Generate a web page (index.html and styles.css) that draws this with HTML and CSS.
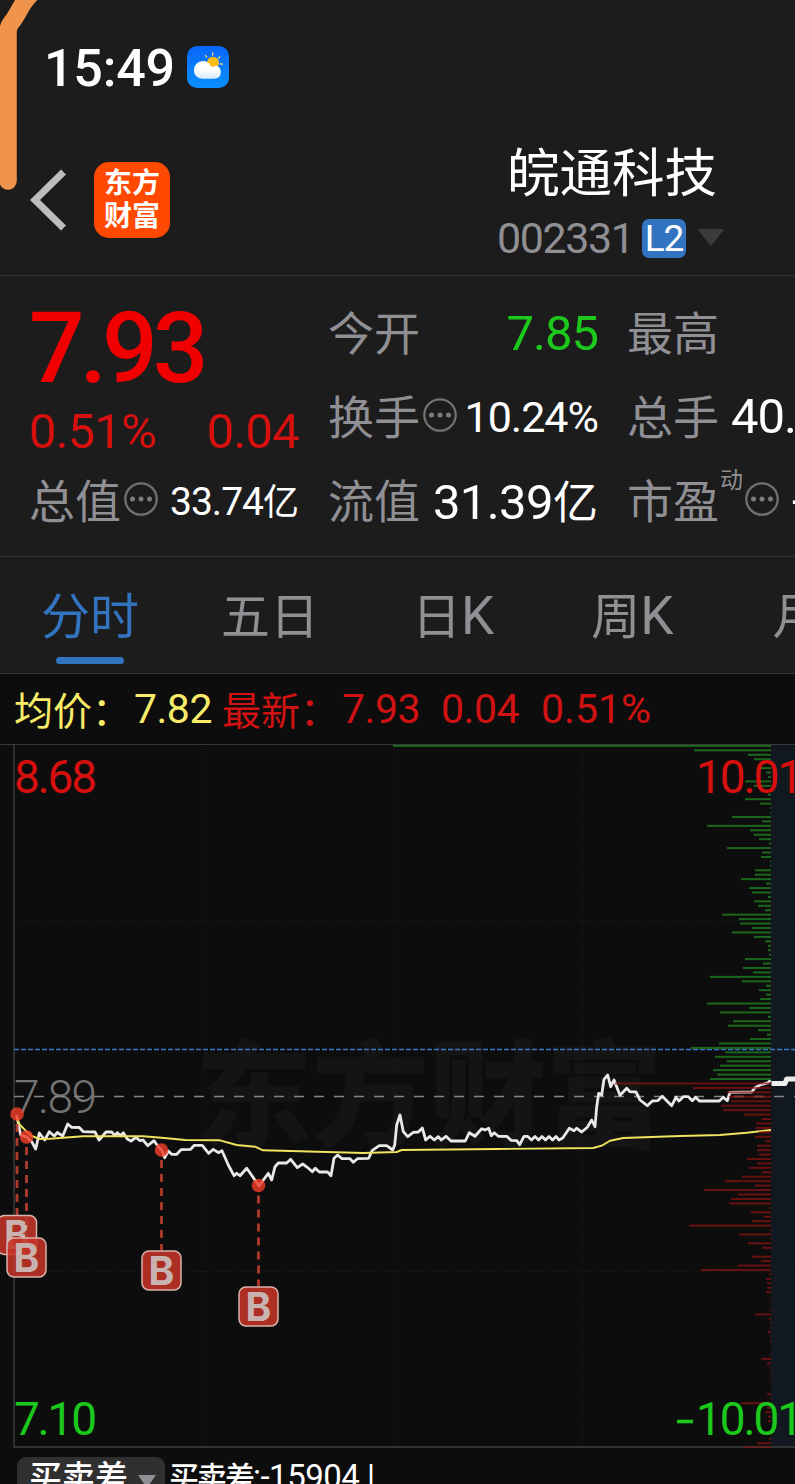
FILE: index.html
```html
<!DOCTYPE html>
<html lang="zh-CN">
<head>
<meta charset="utf-8">
<title>皖通科技 002331</title>
<link rel="stylesheet" href="styles.css">
</head>
<body>
<svg class="edge-stroke" width="50" height="200" viewBox="0 0 50 200"><path d="M32-7C20 4 19 14 11 23Q8 27 8 32V181" fill="none" stroke="#f1944b" stroke-width="17.500" stroke-linecap="round" stroke-linejoin="round"/></svg>
<div class="status">
  <span class="clock">15:49</span>
  <svg class="weather" width="42" height="42" viewBox="0 0 42 42">
    <defs><linearGradient id="sky" x1="0" y1="0" x2="0" y2="1"><stop offset="0" stop-color="#0865f8"/><stop offset="1" stop-color="#0a91ff"/></linearGradient>
    <linearGradient id="cloud" x1="0" y1="0" x2="0" y2="1"><stop offset=".5" stop-color="#fff"/><stop offset="1" stop-color="#d5eaff"/></linearGradient></defs>
    <rect width="42" height="42" rx="10" fill="url(#sky)"/>
    <path d="M18.500 9.500l1 1.700M25.700 7v2.200M32.800 10.500l-1.300 2M33 17.800l2.500.4M31.500 22l1 .8" stroke="#f8d98a" stroke-width="1.300" stroke-linecap="round"/>
    <circle cx="26" cy="16.800" r="6" fill="#fdbb16"/>
    <path d="M15 32.700A8 8 0 0 1 7 24.500 9 9 0 0 1 16 15Q21.500 15 24 20.500 26.500 21.500 29 19.500 33.800 21 33.800 26 33.800 32.700 27 32.700z" fill="url(#cloud)"/>
  </svg>
</div>
<header class="header">
  <svg class="back" width="37" height="62" viewBox="0 0 37 62"><path d="M33.500 3L5 31l28.500 28" fill="none" stroke="#bdbdbd" stroke-width="7"/></svg>
  <div class="logo"><span>东方</span><span>财富</span></div>
  <div class="stock">
    <div class="name">皖通科技</div>
    <div class="code-row"><span class="code">002331</span><span class="level">L2</span><svg width="26" height="18" viewBox="0 0 26 18"><path d="M2 0h22q2 0 1 2L14 16q-1 1.500-2 0L1 2Q0 0 2 0z" fill="#3b3b3b"/></svg></div>
  </div>
</header>
<section class="quote">
  <div class="col col-a">
    <div class="price">7.93</div>
    <div class="change"><span>0.51%</span><span>0.04</span></div>
    <div class="cell"><span class="label">总值</span><svg class="more" viewBox="0 0 34 34"><use href="#dots"/></svg><b class="val small">33.74<i>亿</i></b></div>
  </div>
  <div class="col col-b">
    <div class="cell"><span class="label">今开</span><b class="val open">7.85</b></div>
    <div class="cell"><span class="label">换手</span><svg class="more" viewBox="0 0 34 34"><use href="#dots"/></svg><b class="val medium">10.24%</b></div>
    <div class="cell"><span class="label">流值</span><b class="val wide">31.39<i>亿</i></b></div>
  </div>
  <div class="col col-c">
    <div class="cell"><span class="label">最高</span></div>
    <div class="cell"><span class="label">总手</span><b class="val start">40.</b></div>
    <div class="cell"><span class="label">市盈</span><sup>动</sup><svg class="more" viewBox="0 0 34 34"><g id="dots"><circle cx="17" cy="17" r="15.700" fill="none" stroke="#707070" stroke-width="2.300"/><g fill="#7c7c7c"><circle cx="8.500" cy="17" r="2.500"/><circle cx="17" cy="17" r="2.500"/><circle cx="25.500" cy="17" r="2.500"/></g></g></svg><b class="val minus">-</b></div>
  </div>
</section>
<nav class="tabs">
  <span class="tab active">分时</span><span class="tab">五日</span><span class="tab">日<em>K</em></span><span class="tab">周<em>K</em></span><span class="tab">月</span>
</nav>
<div class="legend">
  <span class="avg">均价：</span><span class="num avg n1">7.82</span><span class="last">最新：</span><span class="num n2">7.93</span><span class="num n3">0.04</span><span class="num n4">0.51%</span>
</div>
<svg class="chart" width="795" height="704" viewBox="0 744 795 704">
  <rect x="771" y="745" width="24" height="702" fill="#111820"/>
  <text class="watermark" x="195" y="1138" textLength="468" lengthAdjust="spacingAndGlyphs">东方财富</text>
  <path d="M205.500 746V1446M394 746V1446M582.500 746V1446M15 921.500H795M15 1271.500H795" stroke="#1f1f1f" stroke-dasharray="1 2"/>
  <path d="M0 744.500H795" stroke="#393939"/>
  <path d="M14 745V1447H795" fill="none" stroke="#323232" stroke-width="1.800"/>
  <path d="M14 1049.500H795" stroke="#3b78cc" stroke-width="1.300" stroke-dasharray="5 2"/>
  <text class="mid" x="14" y="1112.500" textLength="83">7.89</text>
  <path d="M14 1096.500H795" stroke="#858585" stroke-width="1.700" stroke-dasharray="10 10"/>
  <polyline class="line" stroke="#e9e9e9" stroke-width="2.800" points="16.700,1115 19,1127 20.700,1135 26.700,1137 31.700,1141.700 35.700,1149 39.300,1133 44.700,1140 49.300,1131.700 54.300,1136 57.300,1132.500 62.700,1136 67.700,1124 71.700,1127.300 79.300,1127.500 83.300,1131.700 95,1132 99,1140 106,1132 111.700,1132 115,1135.700 117.300,1132.700 120.500,1135.700 123.300,1132.700 127.300,1139 131,1141 136,1137.300 140,1140.700 143,1140 147.700,1145.700 154,1140.700 158.300,1146.700 161.700,1150 164.700,1157.700 168.300,1151 171.700,1154.300 176.700,1154.300 181,1149.700 190.700,1149.300 194.300,1145.300 202.300,1145.300 208.700,1153.300 213.300,1149.300 218.300,1152.700 222,1150.700 228.300,1165 234,1175.700 236.700,1173.300 240,1175.700 246.700,1168.300 255,1180 259,1186 263.300,1180 268.300,1173.300 271.700,1180 275,1166.700 278.300,1163 286.700,1163 290.700,1159.300 297.300,1167.700 302.700,1164 307.300,1167.300 312.300,1171.700 315.300,1168.300 319.300,1172 327.700,1172 331,1175.700 334,1158.300 337.700,1155 342,1158.700 350,1158.700 353.300,1162.300 357.300,1158.700 368.700,1158.300 372,1150.700 379.300,1145.700 386.700,1145.700 392.700,1150 394.700,1145 396.700,1125 400,1115 403.300,1131.700 407.700,1136.700 413.300,1132.300 418.300,1132 422.300,1128 425.700,1140 430,1136.300 434.300,1140 438.300,1136.700 441.300,1140 446,1136.300 451,1141 465.300,1141 469.300,1132.700 475,1136.300 481.700,1128.700 485,1130 488.700,1128.300 491.300,1135.700 494.300,1132.700 498.300,1136.300 506.700,1136.300 511,1140.300 516.700,1140.700 519.700,1144.700 524,1136.300 527.500,1136.300 531.500,1140 535,1136.500 538.500,1140 542,1136.500 545.500,1140 549,1136.500 552.500,1140 556,1136.500 559,1140 562.700,1138 569.300,1128.300 574,1130.700 576.700,1128.300 581.700,1132 587.300,1127.300 591.700,1120 595,1126.700 596.700,1106.700 598.700,1093.300 601.700,1095 604,1079.300 607.700,1075 610.700,1086.700 614,1080 620,1095.300 626.700,1088.300 630,1091.700 636,1092 640,1100 647.300,1105.700 652.300,1101 657.700,1100.700 662.300,1096.300 666.700,1100.700 671.700,1105.700 676,1097.300 679,1101 683.300,1096.700 688.300,1096.700 692.300,1100.700 695.700,1097.300 699.300,1101 719.300,1101 723.300,1097.300 727.300,1100.700 730,1092.300 751.700,1092 755,1087.700 760,1085 768.300,1082.700 770.300,1080"/>
  <polyline class="line" stroke="#efe45d" stroke-width="1.900" points="16.700,1119 20,1125 25,1130 31.700,1136 40,1139 50,1138.700 83,1136.300 143,1136.300 161.700,1137.700 185,1140 220,1140.300 236.700,1145 255,1146.700 263,1150.300 300,1151.300 363,1153 396.700,1152 401.700,1150 496.700,1149 593.300,1148 601.700,1145.700 610,1140.700 623.300,1138 680,1136 720,1135 746.700,1132.700 771,1130"/>
  <g id="volume"></g>
  <polyline class="line" stroke="#ededed" stroke-width="5" points="771.500,1083.500 785,1083.500 786.700,1079 796,1079"/>
  <g class="axis">
    <text class="up" x="14" y="792.500" textLength="83">8.68</text>
    <text class="up" x="696" y="792.500" textLength="107">10.01</text>
    <text class="down" x="14" y="1435" textLength="83">7.10</text>
    <text class="down" x="696" y="1435" textLength="107">10.01</text>
    <path d="M677 1421.500h16" stroke="#1bc81b" stroke-width="3.600"/>
  </g>
  <g id="trades"></g>
</svg>
<footer class="indicator">
  <span class="picker">买卖差<svg width="18" height="14" viewBox="0 0 18 14"><path d="M0 0h18l-9 13z" fill="#8f8f94"/></svg></span>
  <span class="reading">买卖差<u>:-15904 |</u></span>
</footer>
<script src="chart.js"></script>
</body>
</html>
```
FILE: styles.css
```css
* { box-sizing: border-box; }
html { overflow: hidden; }
body {
  margin: 0;
  width: 795px;
  height: 1484px;
  overflow: hidden;
  background: #1c1c1c;
  color: #fff;
  font-family: Roboto, "Noto Sans CJK SC", sans-serif;
  white-space: nowrap;
}
svg { display: block; flex: none; }
b, i, em, u { font-weight: inherit; font-style: normal; text-decoration: none; }

.edge-stroke { position: absolute; left: 0; top: 0; }
.status { height: 134px; padding-left: 44px; display: flex; align-items: center; }
.clock { width: 143px; font-size: 52px; font-weight: 500; letter-spacing: -0.2px; line-height: 60px; padding-top: 4px; }

.header { height: 142px; display: flex; border-bottom: 1px solid #353535; padding-left: 30px; }
.back { margin-top: 35px; }
.logo {
  margin: 28px 0 0 27px; width: 76px; height: 76px; border-radius: 15px; background: #ff4800;
  display: flex; flex-direction: column; align-items: center; padding-top: 3px;
  font: 700 28px/33px "Noto Sans CJK SC", sans-serif;
}
.stock { margin-left: 327px; padding-top: 2px; }
.name { font: 400 52.5px/66px "Noto Sans CJK SC", sans-serif; padding-left: 10px; }
.code-row { display: flex; align-items: center; height: 72px; }
.code { width: 145px; color: #8f8f94; font-size: 43px; letter-spacing: -1.4px; }
.level { width: 44px; height: 39px; border-radius: 7px; background: #3274c0; margin-right: 12px; text-align: center; font-size: 37px; line-height: 40px; letter-spacing: -1px; }

.quote { height: 281px; display: grid; grid-template-columns: 270px 270px 168px; column-gap: 29px; padding: 13px 0 0 29px; border-bottom: 1px solid #353535; }
.cell { display: flex; align-items: center; height: 84px; }
.label { font: 400 46px/60px "Noto Sans CJK SC", sans-serif; color: #8f8f94; margin-top: -3px; }
.price { height: 115px; font-size: 98px; font-weight: 500; line-height: 119px; color: #f00000; letter-spacing: -5px; }
.change { height: 53px; display: flex; justify-content: space-between; font-size: 49px; line-height: 55px; color: #d5100f; letter-spacing: -0.8px; }
.more { width: 34px; height: 34px; margin-left: 3px; }
.val { margin-left: auto; font-size: 49px; line-height: 60px; letter-spacing: -1px; display: flex; align-items: baseline; padding-top: 4px; }
.val i { font: 400 45px/60px "Noto Sans CJK SC", sans-serif; letter-spacing: 0; }
.val.open { color: #1bc81b; padding-top: 5px; }
.small i { font-size: 36px; }
.val.small { font-size: 39px; padding-top: 2px; }
.wide { letter-spacing: -0.6px; }
.medium { font-size: 43px; }
.start { margin-left: 12px; }
.val.minus { margin-left: 13px; }
.down { fill: #1bc81b; }
sup { font: 400 23px/30px "Noto Sans CJK SC", sans-serif; color: #8f8f94; margin: -43px 0 0 1px; vertical-align: baseline; }
sup + .more { margin-left: 2px; }

.tabs { height: 117px; display: flex; border-bottom: 1px solid #353535; padding-left: 41px; }
.tab { font: 400 49px/112px "Noto Sans CJK SC", sans-serif; color: #8f8f94; margin-right: 82px; }
.tab:nth-child(2) { margin-right: 93px; }
.tab:nth-child(3) { margin-right: 97px; }
.tab:nth-child(4) { margin-right: 99px; }
.tab em { font-family: Roboto, sans-serif; font-size: 53px; line-height: 0; }
.active { color: #3274c0; display: flex; flex-direction: column; align-items: center; width: 99px; }
.active::after { content: ""; width: 68px; height: 7px; border-radius: 4px; background: #3274c0; margin-top: -12px; }

.legend { height: 70px; background: #0d0d0d; display: flex; align-items: center; padding-left: 14px; color: #d01212; font: 400 39px/66px "Noto Sans CJK SC", sans-serif; }
.legend > span { margin-top: -3px; }
.legend .num { font-family: Roboto, sans-serif; font-size: 41px; letter-spacing: -0.5px; margin-top: 0; }
.legend .avg { color: #f8ec68; }
.legend .n1 { width: 88px; margin-left: 3px; }
.legend .n2 { width: 99px; margin-left: 3px; }
.legend .n3 { width: 100px; }
.legend .n4 { letter-spacing: 0; }

.chart { background: #0d0d0d; font-family: Roboto, sans-serif; }
.axis, .mid { font-size: 46px; }
.mid { fill: #747474; font-weight: 300; }
.up { fill: #d5100f; }
.watermark { font: 900 116px "Noto Sans CJK SC", sans-serif; fill: #141414; }
.line { fill: none; stroke-linejoin: round; }
.badge { font: 700 39px Inter, sans-serif; fill: #c9b3b1; }

.indicator { height: 36px; background: #0d0d0d; overflow: hidden; display: flex; padding: 9px 0 0 17px; font: 500 33px/36px "Noto Sans CJK SC", sans-serif; }
.picker { width: 148px; height: 44px; border-radius: 9px; background: #303030; display: flex; align-items: flex-start; padding-left: 12px; }
.picker svg { margin: 18px 0 0 10px; }
.reading { font-size: 30px; letter-spacing: -2px; margin-left: 4px; }
.reading u { font-family: Roboto, sans-serif; font-weight: 400; font-size: 33px; letter-spacing: -0.5px; }
```
FILE: chart.js
```js
const NS = "http://www.w3.org/2000/svg";
function add(parent, tag, attrs, text) {
  const el = document.createElementNS(NS, tag);
  for (const k in attrs) el.setAttribute(k, attrs[k]);
  if (text) el.textContent = text;
  parent.appendChild(el);
}

// Volume at each price step, top to bottom
const volume = [378,77,23,17,0,11,5,3,26,17,0,3,26,11,1,1,39,9,64,21,17,12,2,44,9,10,1,1,16,16,30,5,22,19,3,17,13,6,49,32,31,19,39,17,6,3,3,2,26,8,28,18,61,29,5,12,5,11,64,22,51,3,38,43,13,4,21,52,80,46,56,44,51,58,54,61,
156,78,44,42,40,50,48,27,9,15,16,12,16,6,14,14,12,24,14,22,9,29,46,16,67,33,40,42,2,20,7,19,82,1,32,1,23,9,0,19,10,33,70,2,5,4,4,5,0,1,0,1,16,2,1,1,3,1,1,0,0,1,10,4,1,1,0,1,0,0,4,1,30,4,6,3,3,0,0,1,2,14,28];
const firstRed = 76;
const bars = document.getElementById("volume");
volume.forEach((w, i) => {
  if (!w) return;
  add(bars, "rect", {
    x: 771 - w, y: 744.9 + i * 4.4416, width: w, height: 2,
    fill: i < firstRed ? "#1d6b1d" : "#8c1414", "fill-opacity": i < firstRed ? 0.95 : 0.72
  });
});

// Buy markers: point on the line and top of its badge
const trades = document.getElementById("trades");
[[17, 1114, 1215], [26.5, 1137, 1237.500], [161.5, 1150, 1250.500], [258.5, 1185.5, 1286.500]].forEach(([x, y, top]) => {
  add(trades, "path", { d: `M${x} ${y + 10}V${top}`, stroke: "#b03a2c", "stroke-width": 2.8, "stroke-dasharray": "8 6" });
  add(trades, "circle", { cx: x, cy: y, r: 6.8, fill: "#f03c28", "fill-opacity": 0.82 });
  add(trades, "rect", { x: x - 19.5, y: top + 0.5, width: 39, height: 39, rx: 7, fill: "#c43325", "fill-opacity": 0.88, stroke: "#d9b3ad", "stroke-width": 1.5 });
  add(trades, "text", { x, y: top + 34, "text-anchor": "middle", class: "badge" }, "B");
});
```
